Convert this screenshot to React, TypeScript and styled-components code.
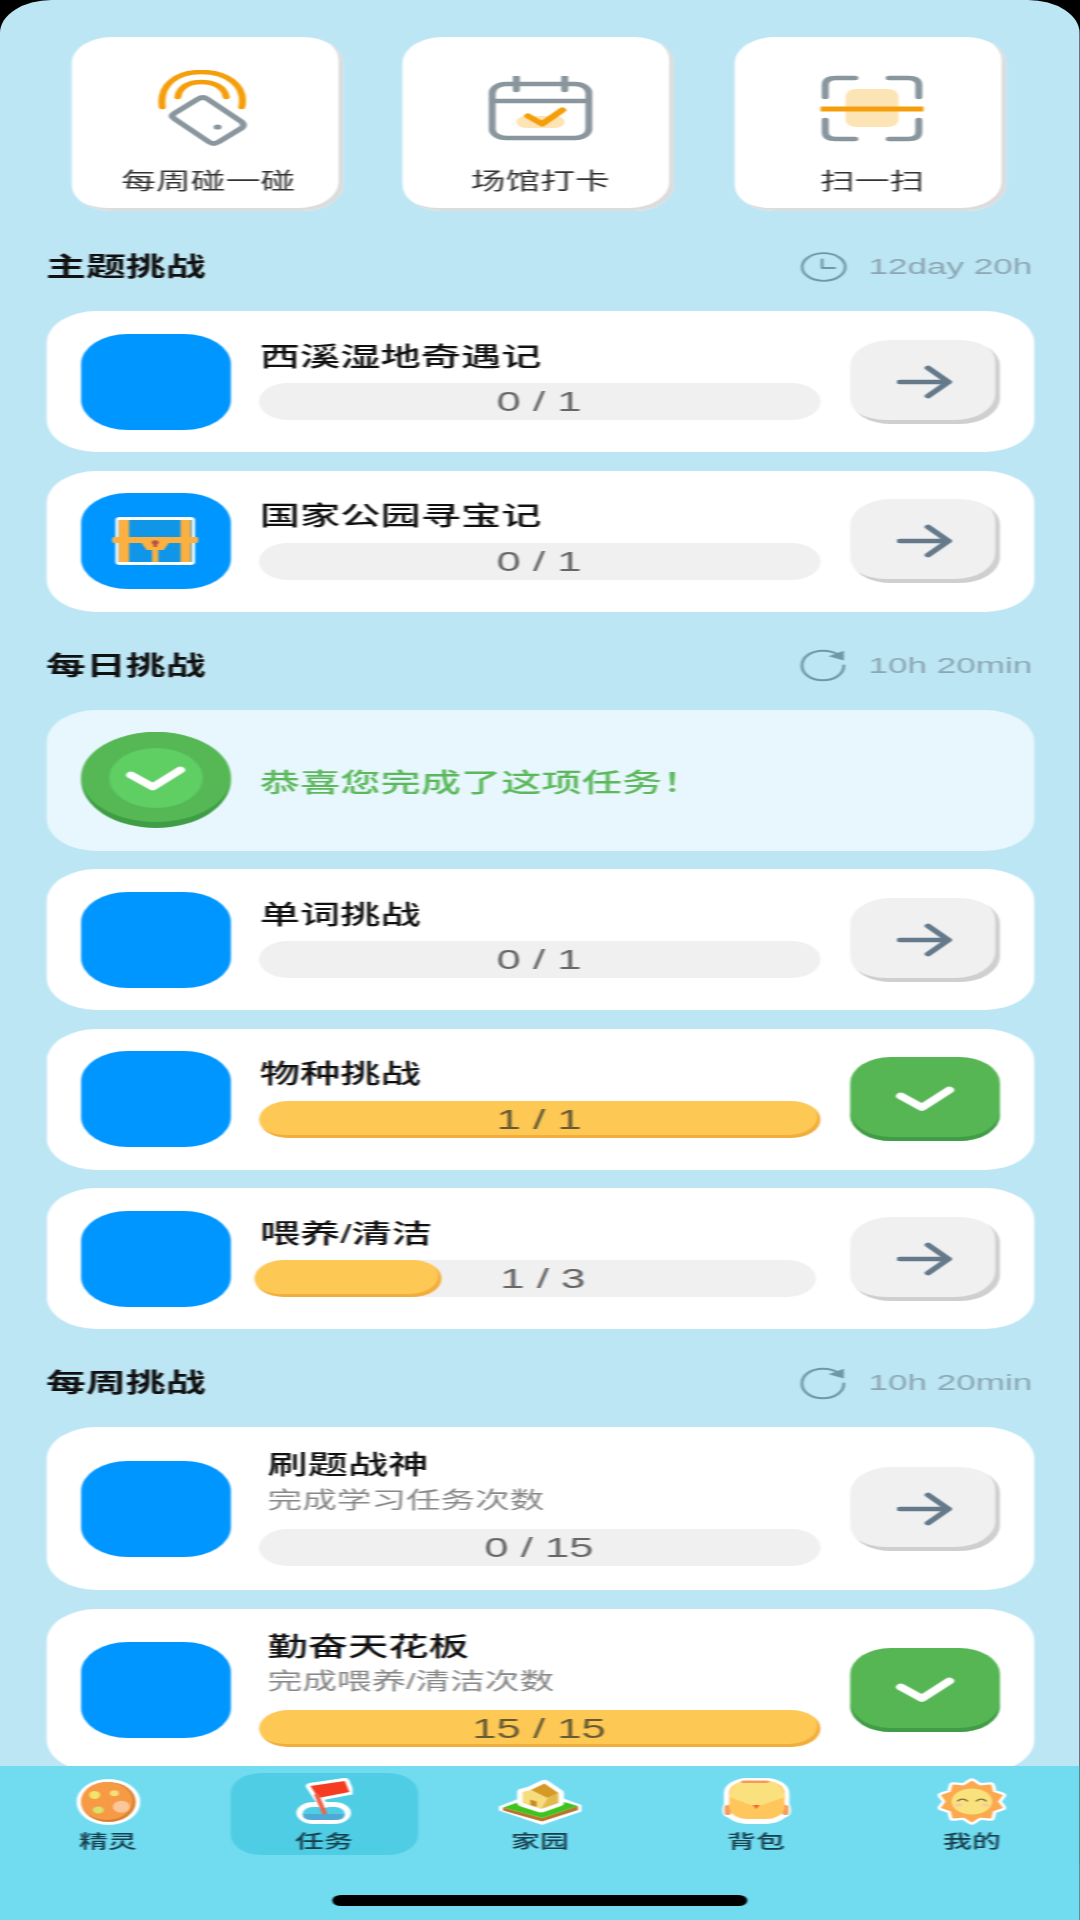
import styled, { createGlobalStyle } from "styled-components";

const GlobalStyle = createGlobalStyle`
  html, body {
    margin: 0;
    padding: 0;
    width: 1080px;
    height: 1920px;
    overflow: hidden;
    background: #000;
  }
  * { box-sizing: border-box; }
`;

// the screen is drawn 692px wide and stretched sideways to 1080, text and icons included
const Stage = styled.div`
  width: 692.3px;
  height: 1920px;
  overflow: hidden;
  border-radius: 33px 33px 0 0;
  background: linear-gradient(#bde6f5 1766px, #71dbf0 1766px);
  transform: scaleX(1.56);
  transform-origin: 0 0;
  font-family: "Liberation Sans", "Noto Sans CJK SC", sans-serif;
`;

const Screen = styled.div`
  height: 100%;
  display: flex;
  flex-direction: column;
  filter: blur(0.6px);
`;

const Content = styled.main`
  flex: 1;
  min-height: 0;
  overflow: hidden;
  padding: 37px 29.5px 0;
`;

const Shortcuts = styled.div`
  display: grid;
  grid-template-columns: repeat(3, 174px);
  column-gap: 38.8px;
  padding-left: 16px;
`;

const Shortcut = styled.div`
  height: 174px;
  display: flex;
  flex-direction: column;
  align-items: center;
  padding: 31px 0 0 2px;
  background: #fff;
  border-radius: 26px;
  box-shadow: inset -3px -3px 0 #dcdcdc;
`;

const ShortcutIcon = styled.div`
  height: 80px;
  display: flex;
  align-items: center;
  justify-content: center;
`;

const ShortcutLabel = styled.div`
  margin-top: 20px;
  font-size: 22.3px;
  line-height: 28px;
  color: #333;
`;

const SectionHead = styled.div<{ $first?: boolean }>`
  height: 30px;
  margin-top: ${(p) => (p.$first ? 41 : 39)}px;
  margin-bottom: 29px;
  padding-right: 1px;
  display: flex;
  align-items: center;
  justify-content: space-between;
`;

const SectionTitle = styled.h2`
  margin: 0 0 5px;
  font-size: 25.6px;
  font-weight: 600;
  color: #111;
`;

const Countdown = styled.div`
  display: flex;
  align-items: center;
  gap: 14px;
  font-size: 22.5px;
  color: #8ba6b2;
`;

const List = styled.div`
  display: flex;
  flex-direction: column;
  gap: 18.5px;
`;

const Row = styled.div<{ $tall?: boolean }>`
  flex-shrink: 0;
  height: ${(p) => (p.$tall ? 163 : 141)}px;
  padding: 0 22px;
  display: flex;
  align-items: center;
  gap: 19px;
  background: #fff;
  border-radius: 32px;
`;

const Banner = styled(Row)`
  background: #e8f7fd;
`;

const BannerText = styled.div`
  font-size: 25.8px;
  font-weight: 500;
  color: #5cb85c;
`;

const Thumb = styled.div`
  flex-shrink: 0;
  width: 96px;
  height: 96px;
  display: flex;
  align-items: center;
  justify-content: center;
  background: #0096ff;
  border-radius: 30px;
`;

const Body = styled.div`
  width: 360px;
  flex-shrink: 0;
  margin-left: -1px;
  display: flex;
  flex-direction: column;
  padding-bottom: 3.5px;
`;

const Title = styled.div<{ $tall?: boolean }>`
  font-size: 25.8px;
  font-weight: 500;
  line-height: 34px;
  color: #111;
  margin-bottom: ${(p) => (p.$tall ? 0 : 9.5)}px;
  padding-left: ${(p) => (p.$tall ? 6 : 1)}px;
`;

const Subtitle = styled.div`
  font-size: 22.2px;
  line-height: 28px;
  margin: 4.5px 0 14px;
  padding-left: 6px;
  color: #888;
`;

const Track = styled.div<{ $nudged?: boolean }>`
  position: relative;
  height: 37px;
  margin: ${(p) => (p.$nudged ? "0 3px 0 -3px" : "0")};
  padding-left: ${(p) => (p.$nudged ? 11 : 0)}px;
  display: flex;
  align-items: center;
  justify-content: center;
  overflow: hidden;
  background: #f0f0f0;
  border-radius: 18.5px;
`;

const Fill = styled.div`
  position: absolute;
  left: 0;
  top: 0;
  bottom: 0;
  background: #fec854;
  border-radius: 18.5px;
  box-shadow: inset -2px -3px 0 #f2ae3d;
`;

const Count = styled.span<{ $over?: boolean }>`
  position: relative;
  font-size: 28px;
  line-height: 37px;
  color: ${(p) => (p.$over ? "#665a35" : "#666")};
`;

const ActionButton = styled.div<{ $done?: boolean }>`
  flex-shrink: 0;
  width: 96px;
  height: 84px;
  display: flex;
  align-items: center;
  justify-content: center;
  border-radius: 26px;
  background: ${(p) => (p.$done ? "#55b653" : "#f0f0f0")};
  box-shadow: ${(p) =>
    p.$done ? "inset 0 -4px 0 #419c47" : "inset -3px -4px 0 #cfcfcf"};
`;

const TabBar = styled.nav`
  flex-shrink: 0;
  height: 154px;
  padding-top: 7px;
  display: flex;
  flex-direction: column;
  align-items: center;
  background: #71dbf0;
`;

const Tabs = styled.div`
  width: 100%;
  display: grid;
  grid-template-columns: repeat(5, 1fr);
`;

const Tab = styled.div<{ $active?: boolean }>`
  justify-self: center;
  width: 120px;
  height: 82px;
  padding-top: 5px;
  display: flex;
  flex-direction: column;
  align-items: center;
  border-radius: 20px;
  background: ${(p) => (p.$active ? "#4ecde4" : "transparent")};
`;

const TabIcon = styled.div`
  height: 47px;
  display: flex;
  align-items: center;
`;

const TabLabel = styled.div`
  margin-top: 5px;
  font-size: 18.5px;
  font-weight: 500;
  line-height: 24px;
  color: #17404e;
`;

const HomeBar = styled.div`
  margin-top: 40px;
  width: 266px;
  height: 11px;
  border-radius: 6px;
  background: #000;
`;

const GRAY = "#8a969e";
const AMBER = "#f59e0b";

const TapIcon = () => (
  <svg width="65" height="77" viewBox="0 0 65 77" fill="none">
    <path d="M3 37C1 15 12 2 28 2C44 2 57 15 54 37" stroke={AMBER} strokeWidth="4.5" strokeLinecap="round" />
    <path d="M13 27C14 17 20 12 28 12C36 12 43 17 44 27" stroke={AMBER} strokeWidth="4.5" strokeLinecap="round" />
    <path
      d="M26 29Q29 26 32 29L54 52Q56 55 54 58L39 72Q36 75 33 72L11 49Q8 46 11 43Z"
      fill="#fff"
      stroke={GRAY}
      strokeWidth="4.5"
    />
    <circle cx="38.5" cy="57" r="2.6" fill={GRAY} />
  </svg>
);

const CalendarIcon = () => (
  <svg width="67" height="65" viewBox="0 0 67 65" fill="none">
    <rect x="18" y="40" width="31" height="12" rx="6" fill="#fde4b5" />
    <rect x="2.5" y="8" width="62" height="54" rx="9" stroke={GRAY} strokeWidth="4.5" />
    <path d="M3 25H64M18 1V14M49 1V14" stroke={GRAY} strokeWidth="4.5" strokeLinecap="round" />
    <path d="M25.5 40L34.5 48L47.5 34" stroke={AMBER} strokeWidth="5" strokeLinecap="round" strokeLinejoin="round" />
  </svg>
);

const ScanIcon = () => (
  <svg width="66" height="67" viewBox="0 0 66 67" fill="none">
    <rect x="16" y="14" width="34" height="38" rx="7" fill="#fde4b5" />
    <path
      d="M22 3H10Q3 3 3 10V22M44 3H56Q63 3 63 10V22M3 45V57Q3 64 10 64H22M63 45V57Q63 64 56 64H44"
      stroke={GRAY}
      strokeWidth="4.5"
      strokeLinecap="round"
    />
    <path d="M1 34H65" stroke={AMBER} strokeWidth="5" strokeLinecap="round" />
  </svg>
);

const ClockIcon = () => (
  <svg width="30" height="30" viewBox="0 0 30 30" fill="none">
    <circle cx="15" cy="15" r="13.8" stroke="#6f97a5" strokeWidth="1.8" />
    <path d="M14 7.5V16H22" stroke="#6f97a5" strokeWidth="1.8" strokeLinecap="round" strokeLinejoin="round" />
  </svg>
);

const RefreshIcon = () => (
  <svg width="31" height="33" viewBox="0 0 30 30" fill="none" preserveAspectRatio="none">
    <path d="M25 5.5C22.5 3 19 1.5 15 1.5C7.5 1.5 2 7.5 2 15C2 22.5 7.5 28.5 15 28.5C22.5 28.5 28 22.5 28 15" stroke="#6f97a5" strokeWidth="1.8" strokeLinecap="round" />
    <path d="M18.5 6.5L28 10.5L28 1.5Z" fill="#6f97a5" />
  </svg>
);

const ArrowIcon = () => (
  <svg width="36" height="34" viewBox="0 0 36 34" fill="none">
    <path d="M2 17H33M20 3L33 17L20 31" stroke="#64798a" strokeWidth="4.5" strokeLinecap="round" strokeLinejoin="round" />
  </svg>
);

const CheckIcon = () => (
  <svg width="38" height="26" viewBox="0 0 38 26" fill="none">
    <path d="M3.5 10L17 21.5L34.5 4" stroke="#fff" strokeWidth="6.5" strokeLinecap="round" strokeLinejoin="round" />
  </svg>
);

const ChestIcon = () => (
  <svg width="55" height="48" viewBox="0 0 55 48">
    <rect x="2" y="0" width="51" height="48" rx="3" fill="#fff" />
    <circle cx="3" cy="23" r="3" fill="#fff" />
    <circle cx="52" cy="23" r="3" fill="#fff" />
    <rect x="4" y="3" width="47" height="42" fill="#0f96e8" />
    <path d="M7.5 3V45M47 3V45" stroke="#fbb040" strokeWidth="6.5" />
    <path d="M2 23H53" fill="none" stroke="#fbb040" strokeWidth="6" strokeLinecap="round" />
    <path d="M16 20H39L33 33H22Z" fill="#fbb040" />
    <rect x="25.5" y="30" width="4" height="15" fill="#fbb040" />
    <circle cx="27.5" cy="25.5" r="2.2" fill="#b5534a" />
    <rect x="26.4" y="25.5" width="2.2" height="4.5" fill="#b5534a" />
  </svg>
);

const DoneBadge = () => (
  <svg width="96" height="96" viewBox="0 0 96 96" style={{ flexShrink: 0 }}>
    <circle cx="48" cy="48" r="48" fill="#3f9e45" />
    <ellipse cx="48" cy="45" rx="48" ry="45" fill="#55b855" />
    <circle cx="48" cy="46" r="30" fill="#5fce63" />
    <path d="M32 43L46 55L63.5 38" fill="none" stroke="#fff" strokeWidth="6.5" strokeLinecap="round" strokeLinejoin="round" />
  </svg>
);

const EggIcon = () => (
  <svg width="41" height="47" viewBox="0 0 41 47">
    <ellipse cx="20.5" cy="24" rx="20.5" ry="23" fill="#fff" />
    <ellipse cx="20.5" cy="24" rx="17.5" ry="20" fill="#d6802d" />
    <ellipse cx="19.5" cy="23" rx="16.5" ry="19" fill="#f79a45" />
    <ellipse cx="11.7" cy="17" rx="3.5" ry="4" fill="#f2e56a" />
    <ellipse cx="24.3" cy="15.3" rx="2.8" ry="3" fill="#f7e07a" />
    <ellipse cx="28.8" cy="28.7" rx="5.5" ry="6" fill="#fbc79a" />
    <ellipse cx="14" cy="32" rx="3.5" ry="3.5" fill="#d8e36a" />
  </svg>
);

const FlagIcon = () => (
  <svg width="37" height="47" viewBox="0 0 37 47">
    <rect x="1" y="24" width="35" height="22" rx="11" fill="#fff" />
    <rect x="5" y="29" width="27" height="13" rx="6.5" fill="#4ecde4" />
    <path d="M5 36H32V36.5Q32 42 25.5 42H11.5Q5 42 5 36.5Z" fill="#4fa9d6" />
    <path d="M10 8L32 3L35 14L15 20Z" fill="#f53c23" stroke="#fff" strokeWidth="6" strokeLinejoin="round" />
    <path d="M14 17L19 30" stroke="#fff" strokeWidth="6" />
    <path d="M10 8L32 3L35 14L15 20Z" fill="#f53c23" />
    <path d="M14 17L19 35" stroke="#f0604a" strokeWidth="3" strokeLinecap="round" />
  </svg>
);

const HouseIcon = () => (
  <svg width="55" height="46" viewBox="0 0 55 46">
    <path d="M27 12L53 26.5V32L28.5 45L1.5 31V28Z" fill="#fff" stroke="#fff" strokeWidth="1.5" strokeLinejoin="round" />
    <path d="M3.5 28.5L28.5 39L51.5 27V31L28.5 42.5L3.5 31.5Z" fill="#b8752a" />
    <path d="M3.5 28.5L27 16L51.5 27L28.5 39Z" fill="#3fc41f" />
    <path d="M16 13L21 11L30 4.4L39 14V24L28 30L16 24Z" fill="#fff" stroke="#fff" strokeWidth="7" strokeLinejoin="round" />
    <path d="M16 13L21 11L32 19L28 30L16 24Z" fill="#f5dd7c" />
    <path d="M32 19L39 14V24L28 30Z" fill="#e2b94d" />
    <path d="M21.3 11L30 4.4L39 14L32 19Z" fill="#d49a24" />
    <path d="M21 20.5L25 22.5V28L21 26Z" fill="#c78a2a" />
  </svg>
);

const BagIcon = () => (
  <svg width="44" height="47" viewBox="0 0 44 47">
    <rect x="1" y="0" width="42" height="46" rx="15" fill="#fff" />
    <rect x="0" y="24" width="44" height="16" rx="6" fill="#fff" />
    <rect x="1.5" y="27" width="4" height="10" rx="2" fill="#f39c5a" />
    <rect x="38.5" y="27" width="4" height="10" rx="2" fill="#f39c5a" />
    <rect x="4.4" y="3" width="35.6" height="38" rx="12" fill="#ffc65c" />
    <path d="M16 3H28Q38 3 40 19L21.8 29L4.5 19Q6 3 16 3Z" fill="#fbe07e" />
    <rect x="12" y="2.5" width="18" height="2.5" rx="1.2" fill="#f39c5a" />
    <path d="M19.5 27L21.8 31L24 27Z" fill="#f0652f" />
  </svg>
);

// ten blunt rays around the face
const sunPoints = (outer: number, inner: number) =>
  Array.from({ length: 20 }, (_, i) => {
    const angle = (Math.PI * i) / 10 - Math.PI / 2;
    const r = i % 2 === 0 ? outer : inner;
    return `${(23 + r * Math.cos(angle)).toFixed(1)},${(23.5 + r * Math.sin(angle)).toFixed(1)}`;
  }).join(" ");

const SunIcon = () => (
  <svg width="46" height="47" viewBox="0 0 46 47">
    <polygon points={sunPoints(20, 16)} fill="#fff" stroke="#fff" strokeWidth="6" strokeLinejoin="round" />
    <polygon points={sunPoints(20, 16)} fill="#fba94e" stroke="#fba94e" strokeWidth="1.5" strokeLinejoin="round" />
    <circle cx="23" cy="23.5" r="13" fill="#f9e27c" />
    <ellipse cx="14.5" cy="27" rx="2.5" ry="1.6" fill="#f7c9a0" />
    <ellipse cx="31.5" cy="27" rx="2.5" ry="1.6" fill="#f7c9a0" />
    <path d="M14 23Q17 19 20 23M26 23Q29 19 32 23" fill="none" stroke="#6a5a3a" strokeWidth="1.2" strokeLinecap="round" />
  </svg>
);

type Challenge = {
  title: string;
  subtitle?: string;
  done: number;
  total: number;
  finished?: boolean;
  nudged?: boolean;
  chest?: boolean;
};

const themeChallenges: Challenge[] = [
  { title: "西溪湿地奇遇记", done: 0, total: 1 },
  { title: "国家公园寻宝记", done: 0, total: 1, chest: true },
];

const dailyChallenges: Challenge[] = [
  { title: "单词挑战", done: 0, total: 1 },
  { title: "物种挑战", done: 1, total: 1, finished: true },
  { title: "喂养/清洁", done: 1, total: 3, nudged: true },
];

const weeklyChallenges: Challenge[] = [
  { title: "刷题战神", subtitle: "完成学习任务次数", done: 0, total: 15 },
  { title: "勤奋天花板", subtitle: "完成喂养/清洁次数", done: 15, total: 15, finished: true },
];

const shortcuts = [
  { label: "每周碰一碰", icon: <TapIcon /> },
  { label: "场馆打卡", icon: <CalendarIcon /> },
  { label: "扫一扫", icon: <ScanIcon /> },
];

const tabs = [
  { label: "精灵", icon: <EggIcon /> },
  { label: "任务", icon: <FlagIcon />, active: true },
  { label: "家园", icon: <HouseIcon /> },
  { label: "背包", icon: <BagIcon /> },
  { label: "我的", icon: <SunIcon /> },
];

const ChallengeRow = ({ title, subtitle, done, total, finished, nudged, chest }: Challenge) => {
  const tall = Boolean(subtitle);
  const percent = (done / total) * 100;
  return (
    <Row $tall={tall}>
      <Thumb>{chest && <ChestIcon />}</Thumb>
      <Body>
        <Title $tall={tall}>{title}</Title>
        {subtitle && <Subtitle>{subtitle}</Subtitle>}
        <Track $nudged={nudged}>
          {done > 0 && <Fill style={{ width: `${percent}%` }} />}
          <Count $over={percent === 100}>
            {done} / {total}
          </Count>
        </Track>
      </Body>
      <ActionButton $done={finished}>{finished ? <CheckIcon /> : <ArrowIcon />}</ActionButton>
    </Row>
  );
};

const App = () => (
  <>
    <GlobalStyle />
    <Stage>
      <Screen>
        <Content>
          <Shortcuts>
            {shortcuts.map(({ label, icon }) => (
              <Shortcut key={label}>
                <ShortcutIcon>{icon}</ShortcutIcon>
                <ShortcutLabel>{label}</ShortcutLabel>
              </Shortcut>
            ))}
          </Shortcuts>

          <SectionHead $first>
            <SectionTitle>主题挑战</SectionTitle>
            <Countdown>
              <ClockIcon />
              12day 20h
            </Countdown>
          </SectionHead>
          <List>
            {themeChallenges.map((c) => (
              <ChallengeRow key={c.title} {...c} />
            ))}
          </List>

          <SectionHead>
            <SectionTitle>每日挑战</SectionTitle>
            <Countdown>
              <RefreshIcon />
              10h 20min
            </Countdown>
          </SectionHead>
          <List>
            <Banner>
              <DoneBadge />
              <BannerText>恭喜您完成了这项任务！</BannerText>
            </Banner>
            {dailyChallenges.map((c) => (
              <ChallengeRow key={c.title} {...c} />
            ))}
          </List>

          <SectionHead>
            <SectionTitle>每周挑战</SectionTitle>
            <Countdown>
              <RefreshIcon />
              10h 20min
            </Countdown>
          </SectionHead>
          <List>
            {weeklyChallenges.map((c) => (
              <ChallengeRow key={c.title} {...c} />
            ))}
          </List>
        </Content>

        <TabBar>
          <Tabs>
            {tabs.map(({ label, icon, active }) => (
              <Tab key={label} $active={active}>
                <TabIcon>{icon}</TabIcon>
                <TabLabel>{label}</TabLabel>
              </Tab>
            ))}
          </Tabs>
          <HomeBar />
        </TabBar>
      </Screen>
    </Stage>
  </>
);

export default App;
